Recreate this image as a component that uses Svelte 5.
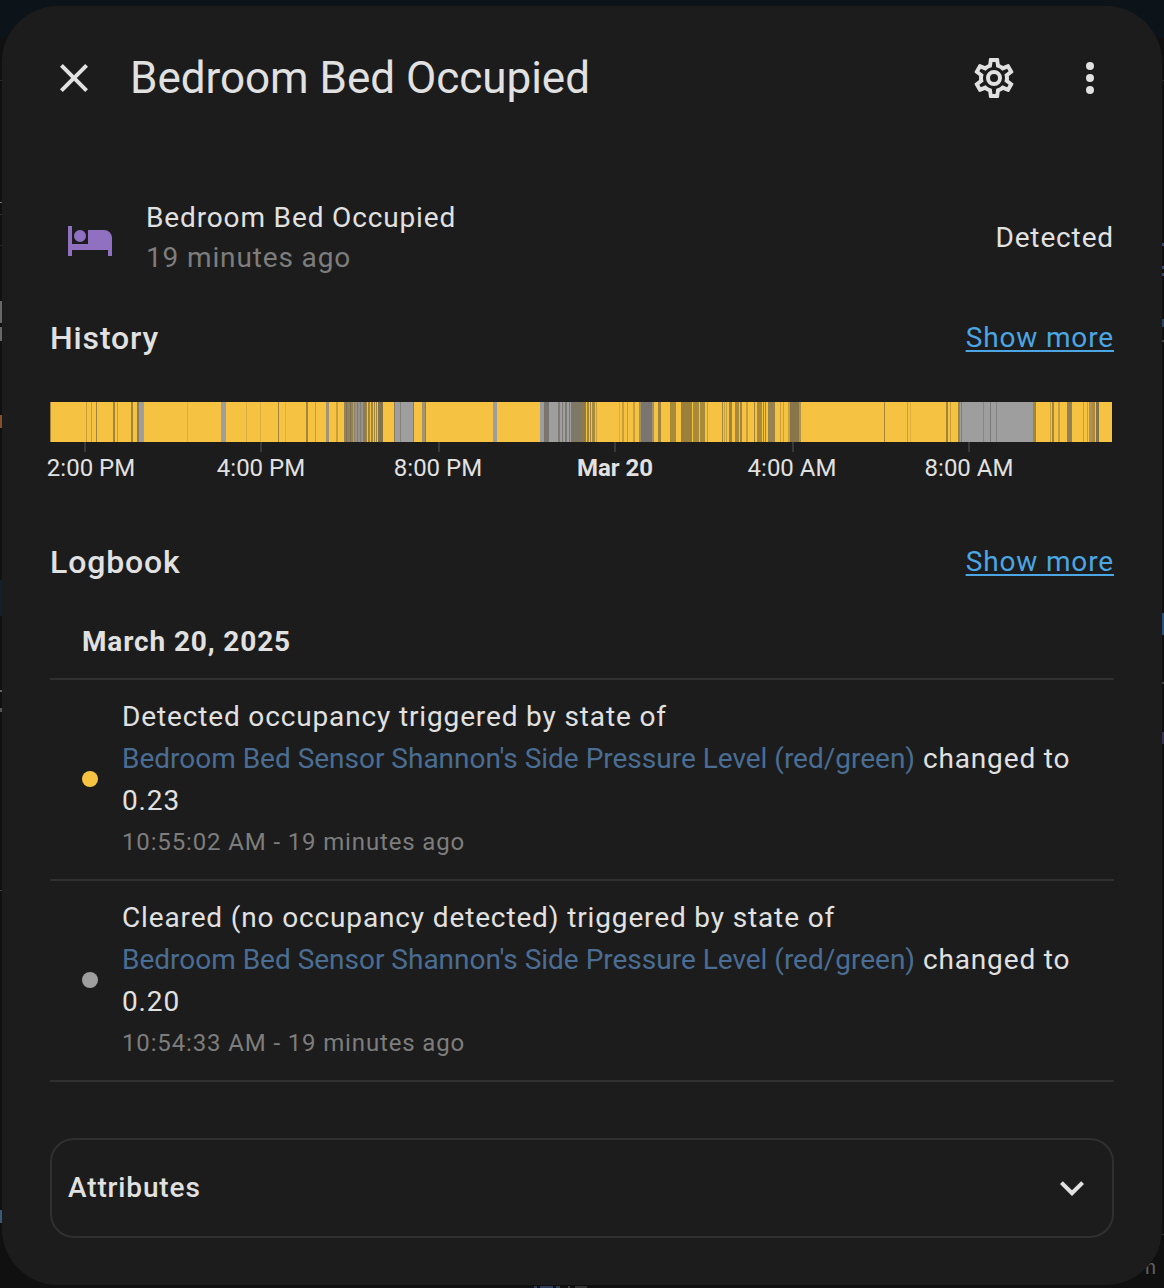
<script>
  const YELLOW = '#f5c242';
  const GRAY = '#9e9e9e';
  const thin = '#c89f3a';
  const faint = '#dcb040';
  const dark = '#a38539';
  const brown = '#8c7d5a';
  const olive = '#a88b3a';

  // [start, width, colour] of each state change on the timeline
  const segments = [
    [0, 1, dark], [36, 1, thin], [41, 1, thin], [46, 1, dark], [63, 2, dark], [67, 1, thin],
    [81, 2, dark], [87, 2, brown], [89, 5, GRAY], [137, 1, faint], [171, 5, GRAY],
    [196, 1, faint], [210, 1, faint], [228, 1, dark], [235, 1, faint], [256, 2, dark], [265, 1, thin],
    [276, 3, '#a49474'], [286, 2, thin],
    [294, 11, '#93825a'], [296, 1, '#7e7454'], [300, 1, '#7e7454'], [303, 1, thin],
    [305, 8, '#96938c'], [307, 1, '#807c74'], [310, 1, '#807c74'],
    [313, 3, brown], [316, 1, dark], [318, 2, dark], [321, 2, dark], [324, 1, dark], [326, 1, dark], [328, 5, '#83734c'],
    [344, 20, GRAY], [344, 1, brown], [350, 1, '#84827e'], [363, 1, brown],
    [372, 4, '#a49474'], [375, 1, '#8c8060'], [443, 4, GRAY],
    [490, 31, GRAY], [494, 5, '#79766f'], [508, 2, '#7f7c75'], [512, 1, '#7f7c75'], [515, 2, '#7f7c75'], [519, 1, '#7f7c75'],
    [521, 10, '#807866'], [531, 5, '#8c7a4c'], [537, 2, dark], [540, 1, dark], [542, 3, olive], [546, 1, thin],
    [569, 1, faint], [572, 2, thin], [577, 1, thin], [583, 2, thin],
    [589, 2, '#a09060'], [591, 11, '#7b7572'], [602, 2, '#9c9272'],
    [608, 3, dark], [620, 6, olive], [631, 11, '#9a8038'], [643, 6, olive], [650, 5, olive], [657, 1, thin],
    [672, 1, dark], [674, 1, thin], [676, 1, thin], [679, 3, dark], [685, 4, olive], [690, 2, dark], [696, 2, thin],
    [704, 1, dark], [707, 5, olive], [713, 1, dark], [715, 1, dark], [718, 7, '#98834e'],
    [730, 1, thin], [733, 1, thin], [738, 2, thin], [740, 9, '#88764a'], [749, 2, '#b19247'],
    [834, 1, dark], [857, 1, thin], [860, 1, faint], [896, 2, dark], [900, 1, thin], [908, 2, dark],
    [910, 74, GRAY], [911, 1, '#7f7f7f'], [933, 1, '#868686'], [940, 1, '#7c7c7c'], [946, 1, '#868686'],
    [983, 3, dark], [1000, 1, thin], [1002, 2, dark], [1008, 2, thin], [1017, 5, '#8f8057'],
    [1033, 1, thin], [1037, 1, thin], [1039, 3, '#a7936b'], [1042, 3, '#b28a35'], [1046, 3, '#817249']
  ];

  const ticks = [
    { x: 35, labelX: 41, label: '2:00 PM' },
    { x: 211, label: '4:00 PM' },
    { x: 389, labelX: 388, label: '8:00 PM' },
    { x: 565, label: 'Mar 20', strong: true },
    { x: 743, labelX: 742, label: '4:00 AM' },
    { x: 919, label: '8:00 AM' }
  ];

  // Slivers of the dimmed dashboard that stay visible around the dialog
  const backdrop = [
    [0, 80, 2, 1, '#252525'], [0, 202, 2, 1, '#777'], [0, 214, 2, 1, '#303030'], [0, 245, 2, 1, '#252525'],
    [0, 301, 2, 22, '#686868'], [0, 327, 2, 14, '#686868'], [0, 415, 2, 13, '#82502e'],
    [0, 580, 2, 36, '#12202e'], [0, 690, 2, 2, '#666'], [0, 708, 2, 4, '#555'], [0, 890, 2, 1, '#444'],
    [0, 1210, 2, 13, '#3c5878'],
    [1162, 80, 2, 1, '#252525'], [1162, 243, 2, 3, '#3a4a6c'], [1162, 266, 2, 3, '#3a4a6c'], [1162, 273, 2, 3, '#3a4a6c'],
    [1162, 319, 2, 8, '#28445f'], [1162, 340, 2, 2, '#444'], [1162, 613, 2, 22, '#28517c'],
    [1162, 682, 2, 2, '#444'], [1162, 732, 2, 12, '#35304f'], [1161, 1234, 3, 1, '#303030'],
    [534, 1286, 3, 2, '#2e3e58'], [540, 1286, 13, 2, '#2e3e58'], [556, 1286, 4, 2, '#2e3e58'],
    [568, 1286, 2, 2, '#444'], [575, 1286, 12, 2, '#333']
  ];

  const sensor = "Bedroom Bed Sensor Shannon's Side Pressure Level (red/green)";
  const entries = [
    { state: 'Detected occupancy', value: '0.23', time: '10:55:02 AM', on: true },
    { state: 'Cleared (no occupancy detected)', value: '0.20', time: '10:54:33 AM', on: false }
  ];
</script>

<div class="page">
  <svg class="backdrop" viewBox="0 0 1164 1288">
    {#each backdrop as [x, y, width, height, fill]}
      <rect {x} {y} {width} {height} {fill} />
    {/each}
    <text class="behind" x="1157" y="1274">n</text>
  </svg>
  <div class="dialog">
    <header>
      <svg class="icon" viewBox="0 0 24 24"><path d="M19,6.41L17.59,5L12,10.59L6.41,5L5,6.41L10.59,12L5,17.59L6.41,19L12,13.41L17.59,19L19,17.59L13.41,12L19,6.41Z" /></svg>
      <h1>Bedroom Bed Occupied</h1>
      <svg class="icon" viewBox="0 0 24 24"><path d="M12,8A4,4 0 0,1 16,12A4,4 0 0,1 12,16A4,4 0 0,1 8,12A4,4 0 0,1 12,8M12,10A2,2 0 0,0 10,12A2,2 0 0,0 12,14A2,2 0 0,0 14,12A2,2 0 0,0 12,10M10,22C9.75,22 9.54,21.82 9.5,21.58L9.13,18.93C8.5,18.68 7.96,18.34 7.44,17.94L4.95,18.95C4.73,19.03 4.46,18.95 4.34,18.73L2.34,15.27C2.21,15.05 2.27,14.78 2.46,14.63L4.57,12.97L4.5,12L4.57,11L2.46,9.37C2.27,9.22 2.21,8.95 2.34,8.73L4.34,5.27C4.46,5.05 4.73,4.96 4.95,5.05L7.44,6.05C7.96,5.66 8.5,5.32 9.13,5.07L9.5,2.42C9.54,2.18 9.75,2 10,2H14C14.25,2 14.46,2.18 14.5,2.42L14.87,5.07C15.5,5.32 16.04,5.66 16.56,6.05L19.05,5.05C19.27,4.96 19.54,5.05 19.66,5.27L21.66,8.73C21.79,8.95 21.73,9.22 21.54,9.37L19.43,11L19.5,12L19.43,13L21.54,14.63C21.73,14.78 21.79,15.05 21.66,15.27L19.66,18.73C19.54,18.95 19.27,19.04 19.05,18.95L16.56,17.95C16.04,18.34 15.5,18.68 14.87,18.93L14.5,21.58C14.46,21.82 14.25,22 14,22H10M11.25,4L10.88,6.61C9.68,6.86 8.62,7.5 7.85,8.39L5.44,7.35L4.69,8.65L6.8,10.2C6.4,11.37 6.4,12.64 6.8,13.8L4.68,15.36L5.43,16.66L7.86,15.62C8.63,16.5 9.68,17.14 10.87,17.38L11.24,20H12.76L13.13,17.39C14.32,17.14 15.37,16.5 16.14,15.62L18.57,16.66L19.32,15.36L17.2,13.81C17.6,12.64 17.6,11.37 17.2,10.2L19.31,8.65L18.56,7.35L16.15,8.39C15.38,7.5 14.32,6.86 13.12,6.62L12.75,4H11.25Z" /></svg>
      <svg class="icon" viewBox="0 0 24 24"><path d="M12,16A2,2 0 0,1 14,18A2,2 0 0,1 12,20A2,2 0 0,1 10,18A2,2 0 0,1 12,16M12,10A2,2 0 0,1 14,12A2,2 0 0,1 12,14A2,2 0 0,1 10,12A2,2 0 0,1 12,10M12,4A2,2 0 0,1 14,6A2,2 0 0,1 12,8A2,2 0 0,1 10,6A2,2 0 0,1 12,4Z" /></svg>
    </header>

    <section class="state">
      <svg class="icon bed" viewBox="0 0 24 24"><path d="M19,7H11V14H3V5H1V20H3V17H21V20H23V11A4,4 0 0,0 19,7M7,13A3,3 0 0,0 10,10A3,3 0 0,0 7,7A3,3 0 0,0 4,10A3,3 0 0,0 7,13Z" /></svg>
      <div class="info">
        <div>Bedroom Bed Occupied</div>
        <div class="muted">19 minutes ago</div>
      </div>
      <div class="value">Detected</div>
    </section>

    <div class="heading">
      <h2>History</h2>
      <a href="#history">Show more</a>
    </div>
    <div class="chart">
      <svg class="timeline" viewBox="0 0 1062 50" shape-rendering="crispEdges">
        <rect width="1062" height="40" fill={YELLOW} />
        {#each segments as [x, w, fill]}
          <rect {x} width={w} height="40" {fill} />
        {/each}
        {#each ticks as tick}
          <rect class="tick" x={tick.x - 1} y="40" width="2" height="10" />
        {/each}
      </svg>
      <svg class="labels" viewBox="0 0 1064 36">
        {#each ticks as tick}
          <text class:strong={tick.strong} x={tick.labelX ?? tick.x} y="24">{tick.label}</text>
        {/each}
      </svg>
    </div>

    <div class="heading">
      <h2>Logbook</h2>
      <a href="#logbook">Show more</a>
    </div>
    <h3>March 20, 2025</h3>
    <ul>
      {#each entries as entry}
        <li>
          <span class="dot" class:on={entry.on}></span>
          <div class="message">
            <p>{entry.state} triggered by state of <span class="sensor">{sensor}</span> changed to {entry.value}</p>
            <div class="time">{entry.time} - 19 minutes ago</div>
          </div>
        </li>
      {/each}
    </ul>

    <div class="attributes">
      <span>Attributes</span>
      <svg class="chevron" viewBox="0 0 24 24"><path d="M7.41,8.58L12,13.17L16.59,8.58L18,10L12,16L6,10L7.41,8.58Z" /></svg>
    </div>
  </div>
</div>

<style>
  :global(body) {
    background: #111;
  }
  .page {
    position: relative;
    box-sizing: border-box;
    width: 1164px;
    height: 1288px;
    padding: 6px 2px 3px;
    overflow: hidden;
    background: linear-gradient(#0c141a 0 38px, #101011 38px);
    color: #e1e1e1;
    font: 400 28px/40px Roboto, sans-serif;
    letter-spacing: 0.86px;
  }
  .backdrop {
    position: absolute;
    inset: 0;
    width: 1164px;
    height: 1288px;
  }
  .behind {
    fill: #606060;
    font-size: 20px;
    text-anchor: end;
  }
  .dialog {
    position: relative;
    box-sizing: border-box;
    height: 1279px;
    padding: 0 48px;
    border-radius: 56px;
    background: #1c1c1c;
  }
  h1, h2, h3, p, ul {
    margin: 0;
    padding: 0;
  }
  header {
    display: flex;
    align-items: center;
    height: 144px;
  }
  .icon {
    flex: none;
    width: 48px;
    height: 48px;
    fill: #e1e1e1;
  }
  h1 {
    flex: 1;
    margin-left: 32px;
    font-size: 44px;
    font-weight: 400;
    line-height: 56px;
    letter-spacing: -0.02px;
  }
  header .icon + .icon {
    margin-left: 48px;
  }
  .state {
    display: flex;
    align-items: center;
    height: 80px;
    margin-top: 48px;
    padding-left: 16px;
  }
  .bed {
    margin-top: 4px;
    fill: #9070c0;
  }
  .info {
    flex: 1;
    margin-left: 32px;
  }
  .muted {
    color: #7d7d7d;
  }
  .heading {
    display: flex;
    align-items: center;
    justify-content: space-between;
    height: 56px;
  }
  h2 {
    font-size: 32px;
    font-weight: 500;
  }
  a {
    color: #4ba6e3;
    text-underline-offset: 3px;
  }
  .chart {
    height: 132px;
  }
  .timeline {
    display: block;
    width: 1062px;
    height: 50px;
  }
  .tick {
    fill: #383838;
  }
  .labels {
    display: block;
    width: 1064px;
    height: 36px;
    overflow: visible;
  }
  .labels text {
    fill: #e1e1e1;
    font-size: 24px;
    letter-spacing: 0;
    text-anchor: middle;
  }
  .labels .strong {
    font-weight: 700;
  }
  .state + .heading {
    margin-top: 32px;
    margin-bottom: 36px;
  }
  h3 {
    padding: 32px 32px 16px;
    font-size: 28px;
    font-weight: 700;
  }
  ul {
    list-style: none;
  }
  li {
    display: flex;
    align-items: center;
    box-sizing: border-box;
    height: 201px;
    padding-left: 32px;
    border-top: 2px solid #303030;
  }
  li:last-child {
    height: 203px;
    border-bottom: 2px solid #303030;
  }
  .dot {
    flex: none;
    width: 16px;
    height: 16px;
    margin: 0 24px 2px 0;
    border-radius: 50%;
    background: #9e9e9e;
  }
  .dot.on {
    background: #f5c242;
  }
  .message {
    line-height: 42px;
  }
  .sensor {
    display: inline-block;
    color: #4a6d94;
    letter-spacing: -0.01px;
  }
  .time {
    padding-bottom: 2px;
    color: #7d7d7d;
    font-size: 24px;
    line-height: 40px;
  }
  .attributes {
    display: flex;
    align-items: center;
    justify-content: space-between;
    box-sizing: border-box;
    height: 100px;
    margin-top: 56px;
    padding: 0 16px;
    border: 2px solid #303030;
    border-radius: 24px;
    font-weight: 500;
  }
  .chevron {
    width: 48px;
    height: 48px;
    fill: #e1e1e1;
  }
</style>
